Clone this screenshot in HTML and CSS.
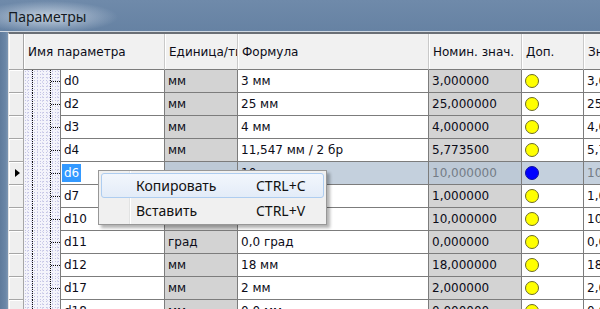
FILE: index.html
```html
<!DOCTYPE html>
<html lang="ru">
<head>
    <meta charset="UTF-8">
    <meta name="viewport" content="width=device-width, initial-scale=1.0">
    <title>Параметры</title>
    <link rel="stylesheet" href="styles.css">
</head>
<body>
    <div class="window">
        <div class="titlebar">Параметры</div>
        <div class="content">
            <div class="frame"></div>
            <div class="grid">
                <div class="row head">
                    <div class="cell rh"></div>
                    <div class="cell hname">Имя параметра</div>
                    <div class="cell">Единица/тип</div>
                    <div class="cell">Формула</div>
                    <div class="cell">Номин. знач.</div>
                    <div class="cell">Доп.</div>
                    <div class="cell">Значение</div>
                </div>

                <div class="row">
                    <div class="cell rh"></div>
                    <div class="tree"><span class="v1"></span><span class="v2"><span class="h"></span></span></div>
                    <div class="cell">d0</div>
                    <div class="cell gray">мм</div>
                    <div class="cell">3 мм</div>
                    <div class="cell gray">3,000000</div>
                    <div class="cell"><span class="dot"></span></div>
                    <div class="cell">3,000000</div>
                </div>
                <div class="row">
                    <div class="cell rh"></div>
                    <div class="tree"><span class="v1"></span><span class="v2"><span class="h"></span></span></div>
                    <div class="cell">d2</div>
                    <div class="cell gray">мм</div>
                    <div class="cell">25 мм</div>
                    <div class="cell gray">25,000000</div>
                    <div class="cell"><span class="dot"></span></div>
                    <div class="cell">25,000000</div>
                </div>
                <div class="row">
                    <div class="cell rh"></div>
                    <div class="tree"><span class="v1"></span><span class="v2"><span class="h"></span></span></div>
                    <div class="cell">d3</div>
                    <div class="cell gray">мм</div>
                    <div class="cell">4 мм</div>
                    <div class="cell gray">4,000000</div>
                    <div class="cell"><span class="dot"></span></div>
                    <div class="cell">4,000000</div>
                </div>
                <div class="row">
                    <div class="cell rh"></div>
                    <div class="tree"><span class="v1"></span><span class="v2"><span class="h"></span></span></div>
                    <div class="cell">d4</div>
                    <div class="cell gray">мм</div>
                    <div class="cell">11,547 мм / 2 бр</div>
                    <div class="cell gray">5,773500</div>
                    <div class="cell"><span class="dot"></span></div>
                    <div class="cell">5,773500</div>
                </div>
                <div class="row selected">
                    <div class="cell rh"><span class="arrow"></span></div>
                    <div class="tree"><span class="v1"></span><span class="v2"><span class="h"></span></span></div>
                    <div class="cell name-edit"><span class="sel-text">d6</span></div>
                    <div class="cell gray">мм</div>
                    <div class="cell">10 мм</div>
                    <div class="cell gray dim">10,000000</div>
                    <div class="cell"><span class="dot blue"></span></div>
                    <div class="cell dim">10,000000</div>
                </div>
                <div class="row">
                    <div class="cell rh"></div>
                    <div class="tree"><span class="v1"></span><span class="v2"><span class="h"></span></span></div>
                    <div class="cell">d7</div>
                    <div class="cell gray">мм</div>
                    <div class="cell">1 мм</div>
                    <div class="cell gray">1,000000</div>
                    <div class="cell"><span class="dot"></span></div>
                    <div class="cell">1,000000</div>
                </div>
                <div class="row">
                    <div class="cell rh"></div>
                    <div class="tree"><span class="v1"></span><span class="v2"><span class="h"></span></span></div>
                    <div class="cell">d10</div>
                    <div class="cell gray">мм</div>
                    <div class="cell">10 мм</div>
                    <div class="cell gray">10,000000</div>
                    <div class="cell"><span class="dot"></span></div>
                    <div class="cell">10,000000</div>
                </div>
                <div class="row">
                    <div class="cell rh"></div>
                    <div class="tree"><span class="v1"></span><span class="v2"><span class="h"></span></span></div>
                    <div class="cell">d11</div>
                    <div class="cell gray">град</div>
                    <div class="cell">0,0 град</div>
                    <div class="cell gray">0,000000</div>
                    <div class="cell"><span class="dot"></span></div>
                    <div class="cell">0,000000</div>
                </div>
                <div class="row">
                    <div class="cell rh"></div>
                    <div class="tree"><span class="v1"></span><span class="v2"><span class="h"></span></span></div>
                    <div class="cell">d12</div>
                    <div class="cell gray">мм</div>
                    <div class="cell">18 мм</div>
                    <div class="cell gray">18,000000</div>
                    <div class="cell"><span class="dot"></span></div>
                    <div class="cell">18,000000</div>
                </div>
                <div class="row">
                    <div class="cell rh"></div>
                    <div class="tree"><span class="v1"></span><span class="v2"><span class="h"></span></span></div>
                    <div class="cell">d17</div>
                    <div class="cell gray">мм</div>
                    <div class="cell">2 мм</div>
                    <div class="cell gray">2,000000</div>
                    <div class="cell"><span class="dot"></span></div>
                    <div class="cell">2,000000</div>
                </div>
                <div class="row">
                    <div class="cell rh"></div>
                    <div class="tree"><span class="v1"></span><span class="v2"><span class="h"></span></span></div>
                    <div class="cell">d18</div>
                    <div class="cell gray">мм</div>
                    <div class="cell">0,0 мм</div>
                    <div class="cell gray">0,000000</div>
                    <div class="cell"><span class="dot"></span></div>
                    <div class="cell">0,000000</div>
                </div>
            </div>
        </div>

        <div class="menu">
            <div class="menu-item active">
                <span class="menu-label">Копировать</span>
                <span class="menu-key">CTRL+C</span>
            </div>
            <div class="menu-item">
                <span class="menu-label">Вставить</span>
                <span class="menu-key">CTRL+V</span>
            </div>
        </div>
    </div>
</body>
</html>
```

FILE: styles.css
```css
body, html {
    margin: 0;
    padding: 0;
    width: 600px;
    height: 309px;
    overflow: hidden;
    background-color: #6884a4;
}
.window {
    position: relative;
    width: 600px;
    height: 309px;
}
.titlebar {
    height: 31px;
    padding-left: 8px;
    line-height: 33px;
    font-family: 'Noto Sans', sans-serif;
    font-size: 14px;
    color: #141a22;
    border-bottom: 1px solid #cfd8e2;
    background:
        radial-gradient(ellipse 70px 16px at 48px 17px, rgba(225, 233, 242, 0.75), rgba(225, 233, 242, 0) 100%),
        linear-gradient(180deg, #6f8aaa 0%, #6682a3 100%);
}
.content {
    display: flex;
    height: 277px;
}
.frame {
    width: 8px;
    background: linear-gradient(90deg, #5f7b9c 0%, #6b87a7 70%, #7d96b2 100%);
}
.grid {
    flex: 1;
    overflow: hidden;
    background-color: #fff;
    border-left: 1px solid #e4e4e4;
    border-top: 2px solid #6a6f76;
    font-family: 'DejaVu Sans', sans-serif;
    font-size: 12px;
    color: #0c0c18;
}
.row {
    display: grid;
    grid-template-columns: 15px 37px 104px 73px 191px 93px 62px 200px;
    height: 23px;
}
.cell {
    box-sizing: border-box;
    padding-left: 3px;
    border-right: 1px solid #7c7c7c;
    border-bottom: 1px solid #7c7c7c;
    white-space: nowrap;
    overflow: hidden;
    display: flex;
    align-items: center;
}
.cell.gray {
    background-color: #d3d3d3;
}
.cell.rh {
    padding: 0;
    background-color: #efefef;
    border-right: 1px solid #a6a6a6;
    border-bottom: 1px solid #a6a6a6;
    box-shadow: inset 1px 1px 0 #ffffff;
}
.row.head {
    grid-template-columns: 15px 141px 73px 191px 93px 62px 200px;
    height: 36px;
    background-color: #f1f1f1;
}
.row.head .cell {
    padding-left: 4px;
    border-right: 1px solid #c9c9c9;
    box-shadow: inset 1px 0 0 #ffffff;
}
.row.head .cell.rh {
    border-right: 1px solid #a6a6a6;
}
.tree {
    display: flex;
    padding-left: 8px;
    border-right: 1px solid #7c7c7c;
    background-color: #f4f4fb;
    background-image:
        radial-gradient(circle, #c4c4e4 0.7px, transparent 0.9px),
        radial-gradient(circle, #d6d6ee 0.7px, transparent 0.9px);
    background-size: 3px 3px, 5px 4px;
    background-position: 0 0, 1px 2px;
}
.tree .v1 {
    width: 17px;
    border-left: 1px dotted #111;
}
.tree .v2 {
    flex: 1;
    display: flex;
    align-items: center;
    border-left: 1px dotted #111;
}
.tree .h {
    width: 9px;
    border-top: 1px dotted #111;
}
.dot {
    display: inline-block;
    width: 12px;
    height: 12px;
    border-radius: 50%;
    background-color: #ffff00;
    border: 1px solid #6b6b2a;
}
.dot.blue {
    background-color: #0000ff;
    border-color: #1010a0;
}
.row.selected .cell,
.row.selected .cell.gray {
    background-color: #c4d0dd;
}
.row.selected .cell.gray {
    background-color: #bdc9d6;
}
.row.selected .cell.rh {
    background-color: #efefef;
    justify-content: center;
}
.row.selected .cell.name-edit {
    background-color: #fff;
    padding-left: 1px;
}
.cell.dim {
    color: #747c86;
}
.sel-text {
    background-color: #3399ff;
    color: #fff;
    padding: 2px 2px 2px 2px;
}
.arrow {
    width: 0;
    height: 0;
    border-top: 4px solid transparent;
    border-bottom: 4px solid transparent;
    border-left: 5px solid #000;
    margin-left: 2px;
}
.menu {
    position: absolute;
    left: 98px;
    top: 170px;
    width: 229px;
    box-sizing: border-box;
    padding: 2px;
    background-color: #f0f0f0;
    background-image: linear-gradient(90deg, transparent 30px, #e2e3e3 30px, #e2e3e3 31px, #ffffff 31px, #ffffff 32px, transparent 32px);
    border: 1px solid #979797;
    box-shadow: 3px 3px 3px rgba(0, 0, 0, 0.3);
    font-family: 'Noto Sans', sans-serif;
    font-size: 14px;
    color: #111;
}
.menu-item {
    display: flex;
    align-items: center;
    height: 24px;
    box-sizing: border-box;
    border: 1px solid transparent;
    border-radius: 3px;
    padding-left: 34px;
}
.menu-item.active {
    height: 25px;
    background: linear-gradient(180deg, #f2f6fc 0%, #e3ecf8 100%);
    border-color: #aecdf0;
}
.menu-label {
    width: 120px;
}
```
